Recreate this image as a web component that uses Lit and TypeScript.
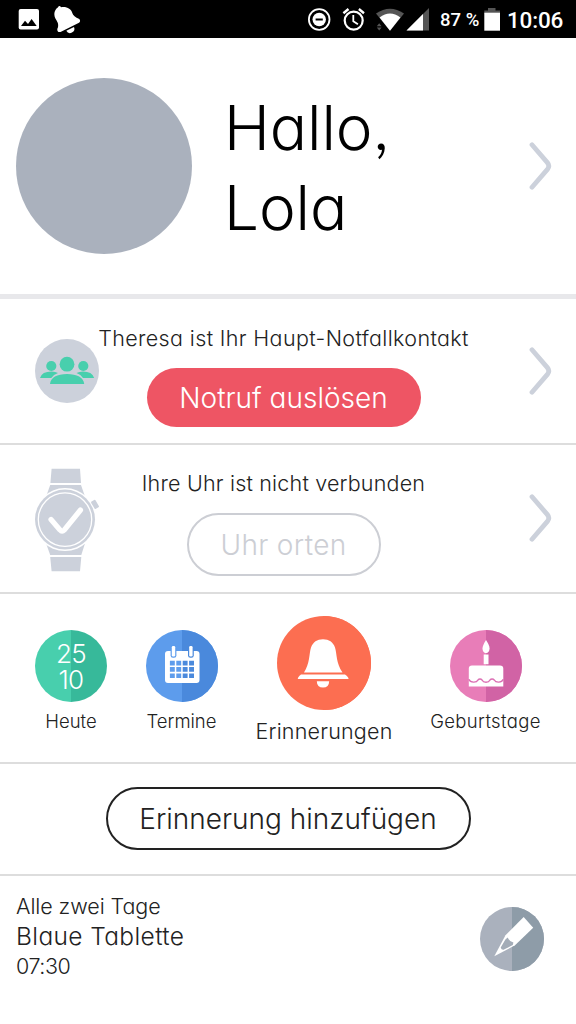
import { LitElement, html, svg, css } from "lit";
import { customElement, property } from "lit/decorators.js";

@customElement("chevron-right")
class ChevronRight extends LitElement {
  static styles = css`:host{display:block;flex:none;width:24px;height:48px}svg{display:block}`;
  render() {
    return html`<svg width="24" height="48" viewBox="0 0 24 48"><path d="M4 2.8 L19.4 20.6 Q22.2 24 19.4 27.4 L4 45.2" fill="none" stroke="#ccd1db" stroke-width="4.8" stroke-linecap="round"/></svg>`;
  }
}

@customElement("status-bar")
class StatusBar extends LitElement {
  static styles = css`
    :host{display:flex;height:38px;background:#000;color:#fff;align-items:stretch;justify-content:space-between;font:500 18.5px/38px Roboto,sans-serif}
    svg{display:block}
    .right{display:flex}
    .pct{width:44px;padding-top:1px;white-space:nowrap;height:37px}
    .time{font-size:22.5px;width:69px;line-height:40px;letter-spacing:-.2px}
  `;
  render() {
    return html`
      <svg width="100" height="38" viewBox="0 0 100 38">
        <rect x="18.7" y="9" width="20.3" height="20.6" rx="2" fill="#fff"/>
        <path d="M21 26 L25 20.8 L28 24 L31.6 19 L36.7 26Z" fill="#000"/>
        <path d="M57.8 7.6 Q59.5 4.8 61 7.3 C67 6.4 71 9 72.4 13.2 Q73.2 16.5 79.3 19 Q81 21 79 22.8 L60.5 32 Q57 32.6 57.3 29 Q59.4 25 56.6 20.5 C53 15.5 54 10.2 57.8 7.6Z" fill="#fff"/>
        <path d="M66.3 30.8 L74 27 A4.3 4.3 0 0 1 66.3 30.8Z" fill="#fff"/>
      </svg>
      <div class="right">
        <svg width="134" height="38" viewBox="306 0 134 38">
          <circle cx="319.2" cy="19.5" r="10.3" fill="none" stroke="#fff" stroke-width="1.8"/>
          <circle cx="319.2" cy="19.5" r="6.7" fill="#fff"/><path d="M315.6 19.5h7.2" stroke="#000" stroke-width="2"/>
          <circle cx="353.7" cy="20.6" r="9" fill="none" stroke="#fff" stroke-width="2.2"/>
          <path d="M353.3 15v6.2l4.6 3" fill="none" stroke="#fff" stroke-width="1.8"/>
          <path d="M343.4 13.2l5.1-4.2M364 13.2l-5.1-4.2" stroke="#fff" stroke-width="2.4"/>
          <path d="M376 13.5 Q390 4 404 13.5 L390 30.8Z" fill="#555"/>
          <path d="M379.6 17.5 Q390 9.5 400.4 17.5 L390 30.8Z" fill="#fff"/>
          <path d="M376.8 26.2l2.4-3 2.4 3zM376.8 27.6l2.4 3 2.4-3z" fill="#555"/>
          <path d="M429 8v22.5h-22.5z" fill="#555"/><path d="M423 14v16.5h-16.5z" fill="#fff"/>
        </svg>
        <div class="pct">87 %</div>
        <svg width="23" height="38" viewBox="484 0 23 38"><path d="M488 8h7.5v2.5h4.5v3h-15.7v-3h3.7z" fill="#555"/><path d="M484.3 12.7h15.7v18h-15.7z" fill="#fff"/></svg>
        <div class="time">10:06</div>
      </div>`;
  }
}

@customElement("split-disc")
class SplitDisc extends LitElement {
  @property() left = "";
  @property() right = "";
  @property({ type: Number }) size = 72;
  @property({ attribute: false }) glyph: unknown = "";
  static styles = css`:host{display:block}svg{display:block}`;
  render() {
    const r = this.size / 2;
    return html`<svg width=${this.size} height=${this.size} viewBox="0 0 ${this.size} ${this.size}">
      <circle cx=${r} cy=${r} r=${r} fill=${this.left}/>
      <path d="M${r} 0 A${r} ${r} 0 0 1 ${r} ${this.size}Z" fill=${this.right}/>
      ${this.glyph}</svg>`;
  }
}

const cells = [0, 1, 2].map(r => [0, 1, 2, 3].map(c => `M${23.9 + c * 6.4} ${30.7 + r * 6.35}h4.9v4.7h-4.9z`).join("")).join("");
const calendar = svg`
  <path fill="#fff" fill-rule="evenodd" d="M22 21H50.5Q53.5 21 53.5 24V50Q53.5 53 50.5 53H22Q19 53 19 50V24Q19 21 22 21Z${cells}"/>
  <rect x="24.6" y="15.2" width="5.8" height="12.6" rx="2.4" fill="#5d9cec"/><rect x="42" y="15.2" width="5.8" height="12.6" rx="2.4" fill="#4a89dc"/>
  <rect x="25.8" y="16" width="3.4" height="10.6" rx="1.3" fill="#fff"/><rect x="43.2" y="16" width="3.4" height="10.6" rx="1.3" fill="#fff"/>`;
const bell = svg`
  <path fill="#fff" d="M27 56.5 C33 47 32 38 34 31.5 C36 26 40 23.2 46 23.2 S56 26 58 31.5 C60 38 59 47 65.5 56.5Z"/>
  <path fill="#fff" d="M20.8 63 Q20.6 61 24 58.5H68Q71.8 61 71.5 63Z"/><path fill="#fff" d="M39.8 65.3H52.2Q52 71.6 46 71.6T39.8 65.3Z"/>`;
const cake = svg`
  <path fill="#fff" d="M36 10 Q39.6 15.5 39.6 18.5 Q39.4 22.7 36 23.3 Q32.6 22.7 32.5 18.5 Q32.6 15.5 36 10Z"/>
  <path fill="#fff" d="M33.7 24.5h4.8v9.7h-4.8zM22 35.5H50Q53.3 35.5 53.3 38.5V56.5H18.8V38.5Q18.8 35.5 22 35.5Z"/>
  <path fill="none" stroke="#dc70b4" stroke-width="1.4" d="M18.8 49.2C20.5 53 26.5 53 28 50C29 48.6 31 48.6 32 50C33.5 53 38.5 53 40 50C41 48.6 43.2 48.6 44.2 50C46 53 51.5 53 53.3 49.2"/>`;
const pencil = svg`
  <path fill="#fff" d="M43.7 10 L53.2 20.8 L35 38.3 L14.3 49.3 L25.5 28.2Z"/>
  <path fill="#a3acb7" d="M27.7 30.6 Q29.1 34.4 33.4 35.4 L32.8 38 L23.5 42.8 Q21.3 43 20.7 40.5 L25.4 32.5Z"/>`;

@customElement("app-root")
class AppRoot extends LitElement {
  static styles = css`
    :host{display:flex;flex-direction:column;width:576px;height:1024px;background:#fff;overflow:hidden;color:#222;font-family:Inter,"Noto Sans",sans-serif;font-weight:300;font-feature-settings:"cv11","ss03";white-space:nowrap}
    *{box-sizing:border-box}
    svg{display:block}
    .profile{display:flex;height:261px;border-bottom:5px solid #e8e8eb;padding:40px 24px 0 16px}
    .avatar{width:176px;height:176px;border-radius:50%;background:#aab1bd;margin-right:32px;flex:none}
    .hello{font-size:62px;line-height:80px;color:#000;padding-top:10px;flex:1;letter-spacing:-.1px}
    .profile chevron-right{margin-top:64px}
    .row{display:flex;border-bottom:2px solid #ddd}
    .contact{height:146px;padding:0 24px 0 35px}
    .watch{height:149px;padding:0 24px 0 35px}
    .mid{flex:1;min-width:0;display:flex;flex-direction:column;align-items:center}
    .contact .mid{margin-right:60px}
    .watch .mid{margin-right:62px}
    .contact .ic{margin-top:40px;width:64px;flex:none}
    .watch .ic{margin-top:23px;width:66px;flex:none}
    .contact chevron-right{margin-top:48px}
    .watch chevron-right{margin-top:49px}
    .line{font-size:21.5px;line-height:26px}
    .contact .line{margin-top:26px;letter-spacing:.36px}
    .watch .line{margin-top:25px;letter-spacing:.19px}
    .btn{border-radius:32px;font-size:28px;display:flex;align-items:center;justify-content:center}
    .danger{width:274px;height:59px;background:#ee5564;color:#fff;margin-top:17px;padding-top:1px}
    .ghost{width:194px;height:63px;border:2px solid #ccced4;color:#ccced4;margin-top:17px;letter-spacing:.35px;padding-top:1px}
    .tabs{display:grid;grid-template-columns:142px 79px 206px 117px;height:170px;padding-top:36px;border-bottom:2px solid #ddd}
    .tab{display:flex;flex-direction:column;align-items:center;font-size:18.5px;line-height:24px}
    .tab span{margin-top:7px}
    .tab.on{font-size:21.5px;margin-top:-14px}
    .tab.on span{margin-top:9px;letter-spacing:.2px}
    .wide{letter-spacing:.36px}
    .date{width:72px;height:72px;border-radius:50%;background:linear-gradient(90deg,#48cfad 50%,#37b99a 50%);color:#fff;font-size:26px;line-height:26px;text-align:center;padding-top:10.5px;letter-spacing:-.6px}
    .add{height:112px;padding-top:23px;justify-content:center}
    .outline{width:365px;height:63px;border:2px solid #222}
    .item{display:flex;justify-content:space-between;padding:16px 32px 0 16px}
    .sm{font-size:21.5px;line-height:28px;letter-spacing:-.08px}
    .lg{font-size:24.5px;line-height:32px;letter-spacing:.38px}
    .clock{letter-spacing:-.45px}
    .edit{margin-top:15px}
  `;
  render() {
    return html`
      <status-bar></status-bar>
      <div class="profile"><div class="avatar"></div><div class="hello">Hallo,<br>Lola</div><chevron-right></chevron-right></div>
      <div class="row contact">
        <svg class="ic" width="64" height="64" viewBox="0 0 64 64"><circle cx="32" cy="32" r="32" fill="#ccd1db"/>
          <g fill="#48cfad"><circle cx="32" cy="25.2" r="7.4"/><circle cx="16.3" cy="27" r="5.1"/><circle cx="48.3" cy="27" r="5.1"/>
          <path d="M15 44.9C15.5 38.5 22 35 32 35S48.7 38.5 49.2 44.9Z"/><path d="M5 39Q7 32.6 16.5 32.6Q20.5 32.7 23 34Q18.5 35.5 16.3 39Z"/><path d="M59.2 39Q57 32.6 48 32.6Q44 32.7 41.5 34Q45.9 35.5 48 39Z"/></g></svg>
        <div class="mid"><span class="line">Theresa ist Ihr Haupt-Notfallkontakt</span><div class="btn danger">Notruf auslösen</div></div>
        <chevron-right></chevron-right>
      </div>
      <div class="row watch">
        <svg class="ic" width="66" height="104" viewBox="35 468 66 104"><g fill="#ccd1db">
          <path d="M51.6 468.7H80L81 483H50.4ZM50.2 485H81L84.8 496H46.3ZM46.3 544H84.8L81.3 555H50.2ZM50.2 557H81.3L80 571.2H51.6Z"/>
          <circle cx="65" cy="519.6" r="31.5" fill="#fff"/><circle cx="65" cy="519.6" r="30"/><circle cx="65" cy="519.6" r="26.7" fill="none" stroke="#fff" stroke-width="1.3"/>
          <rect x="92.5" y="500.2" width="5" height="8.5" rx="1" transform="rotate(-31 95 504.4)"/></g>
          <path d="M51 519.5L60 530Q62 532.5 64.3 530L80.5 510" fill="none" stroke="#fff" stroke-width="5.2" stroke-linecap="round"/></svg>
        <div class="mid"><span class="line">Ihre Uhr ist nicht verbunden</span><div class="btn ghost">Uhr orten</div></div>
        <chevron-right></chevron-right>
      </div>
      <div class="tabs">
        <div class="tab"><div class="date">25<br>10</div><span>Heute</span></div>
        <div class="tab"><split-disc left="#5d9cec" right="#4a89dc" .glyph=${calendar}></split-disc><span>Termine</span></div>
        <div class="tab on"><split-disc left="#fc6e51" right="#fc6e51" .size=${94} .glyph=${bell}></split-disc><span>Erinnerungen</span></div>
        <div class="tab"><split-disc left="#e87db8" right="#d163a5" .glyph=${cake}></split-disc><span class="wide">Geburtstage</span></div>
      </div>
      <div class="row add"><div class="btn outline">Erinnerung hinzufügen</div></div>
      <div class="item"><div><div class="sm">Alle zwei Tage</div><div class="lg">Blaue Tablette</div><div class="sm clock">07:30</div></div>
        <split-disc class="edit" left="#aab1bd" right="#8e9ca8" .size=${64} .glyph=${pencil}></split-disc></div>`;
  }
}
